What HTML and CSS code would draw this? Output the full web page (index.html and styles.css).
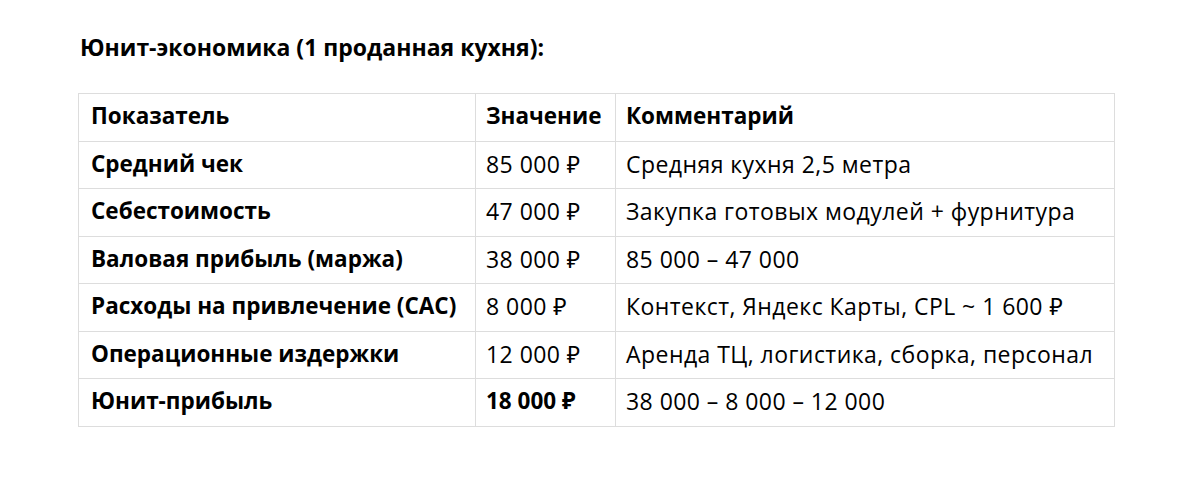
FILE: index.html
```html
<!DOCTYPE html>
<html lang="ru">
<head>
<meta charset="utf-8">
<link rel="stylesheet" href="styles.css">
</head>
<body>
<main class="page">
  <h2 class="title">Юнит-экономика (1 проданная кухня):</h2>
  <table class="unit">
    <colgroup>
      <col class="c1"><col class="c2"><col class="c3">
    </colgroup>
    <thead>
      <tr><th>Показатель</th><th>Значение</th><th>Комментарий</th></tr>
    </thead>
    <tbody>
      <tr><th>Средний чек</th><td>85 000 ₽</td><td>Средняя кухня 2,5 метра</td></tr>
      <tr><th>Себестоимость</th><td>47 000 ₽</td><td>Закупка готовых модулей + фурнитура</td></tr>
      <tr><th>Валовая прибыль (маржа)</th><td>38 000 ₽</td><td>85 000 – 47 000</td></tr>
      <tr><th>Расходы на привлечение (CAC)</th><td>8 000 ₽</td><td>Контекст, Яндекс Карты, CPL ~ 1 600 ₽</td></tr>
      <tr><th>Операционные издержки</th><td>12 000 ₽</td><td>Аренда ТЦ, логистика, сборка, персонал</td></tr>
      <tr><th>Юнит-прибыль</th><td class="strong">18 000 ₽</td><td>38 000 – 8 000 – 12 000</td></tr>
    </tbody>
  </table>
</main>
</body>
</html>
```
FILE: styles.css
```css
html, body {
  margin: 0;
  padding: 0;
  background: #ffffff;
}
body {
  font-family: "Open Sans", "Noto Sans", "Liberation Sans", sans-serif;
  color: #000;
}
.page {
  padding: 32px 78px 0 78px;
}
.title {
  margin: 0 0 0 2px;
  font-size: 23px;
  font-weight: 700;
  line-height: 30px;
  letter-spacing: 0;
}
.unit {
  margin-top: 31px;
  width: 1036px;
  border-collapse: collapse;
  table-layout: fixed;
}
.c1 { width: 397px; }
.c2 { width: 140px; }
.c3 { width: 499px; }
.unit th, .unit td {
  border: 1px solid #dddddd;
  height: 44.5px;
  padding: 0 0 2px 12px;
  text-align: left;
  vertical-align: middle;
  white-space: nowrap;
  line-height: 26px;
}
.unit th {
  font-size: 22.5px;
  font-weight: 700;
  letter-spacing: 0;
}
.unit td {
  font-size: 23px;
  font-weight: 400;
  letter-spacing: 0.45px;
}
.unit td.strong {
  font-size: 22.5px;
  font-weight: 700;
  letter-spacing: 0;
}
.unit td:first-child, .unit th:first-child { padding-left: 12px; }
.unit th + td, .unit thead th:nth-child(2) { padding-left: 10px; }
.unit td:last-child, .unit thead th:last-child { padding-left: 10px; }
```
